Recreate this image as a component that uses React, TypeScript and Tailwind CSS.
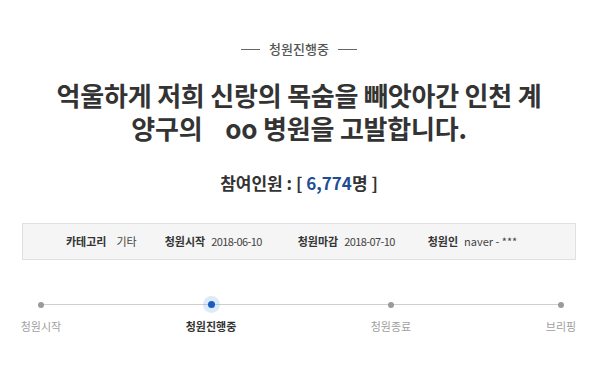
const KR = { fontFamily: '"Noto Sans CJK KR", "Noto Sans", sans-serif' };

const steps = [
  { label: "청원시작", active: false },
  { label: "청원진행중", active: true },
  { label: "청원종료", active: false },
  { label: "브리핑", active: false },
];

export default function App() {
  return (
    <div className="w-[598px] h-[385px] bg-white overflow-hidden" style={KR}>
      {/* status */}
      <div className="flex items-center justify-center gap-[9px] pt-[39px] text-[#555]">
        <span className="w-[19px] h-px bg-[#666]" />
        <span className="text-[13px] leading-[20px] font-medium">청원진행중</span>
        <span className="w-[19px] h-px bg-[#666]" />
      </div>

      {/* title */}
      <h1 className="mt-[19px] text-center text-[26px] leading-[33px] font-bold text-[#333] tracking-[-0.2px]">
        억울하게 저희 신랑의 목숨을 빼앗아간 인천 계
        <br />
        양구의 &nbsp;&nbsp;&nbsp;oo 병원을 고발합니다.
      </h1>

      {/* count */}
      <div className="mt-[27px] text-center text-[17px] leading-[24px] font-bold text-[#333]">
        참여인원 : [ <span className="text-[#1f4e96]">6,774</span>명 ]
      </div>

      {/* info box */}
      <div className="mx-[22px] mt-[28px] h-[37px] bg-[#f5f5f5] border border-[#e0e0e0] flex items-center pl-[43px] text-[11px] text-[#444]">
        <span className="font-bold text-[#333]">카테고리</span>
        <span className="ml-[10px]">기타</span>
        <span className="ml-[28px] font-bold text-[#333]">청원시작</span>
        <span className="ml-[6px] tracking-[-0.6px]">2018-06-10</span>
        <span className="ml-[36px] font-bold text-[#333]">청원마감</span>
        <span className="ml-[6px] tracking-[-0.6px]">2018-07-10</span>
        <span className="ml-[33px] font-bold text-[#333]">청원인</span>
        <span className="ml-[6px]">naver - ***</span>
      </div>

      {/* timeline */}
      <div className="relative mt-[40px] pl-[11px]">
        <div className="absolute left-[41px] w-[520px] top-[4px] h-px bg-[#cfcfcf]" />
        <div className="relative flex">
          {steps.map((s, i) => (
            <div
              key={s.label}
              className={`w-[60px] flex flex-col items-center ${i === 1 ? "ml-[110px]" : i === 2 ? "ml-[120px]" : i === 3 ? "ml-[110px]" : ""}`}
            >
              <div className="h-[9px] flex items-center justify-center">
                {s.active ? (
                  <span className="w-[7px] h-[7px] rounded-full bg-[#1a5bbf] shadow-[0_0_0_5px_rgba(120,170,235,0.25)]" />
                ) : (
                  <span className="w-[6px] h-[6px] rounded-full bg-[#9a9a9a]" />
                )}
              </div>
              <span
                className={`mt-[9px] whitespace-nowrap text-[11px] leading-[16px] ${s.active ? "font-bold text-[#333]" : "text-[#a0a0a0]"}`}
              >
                {s.label}
              </span>
            </div>
          ))}
        </div>
      </div>
    </div>
  );
}
